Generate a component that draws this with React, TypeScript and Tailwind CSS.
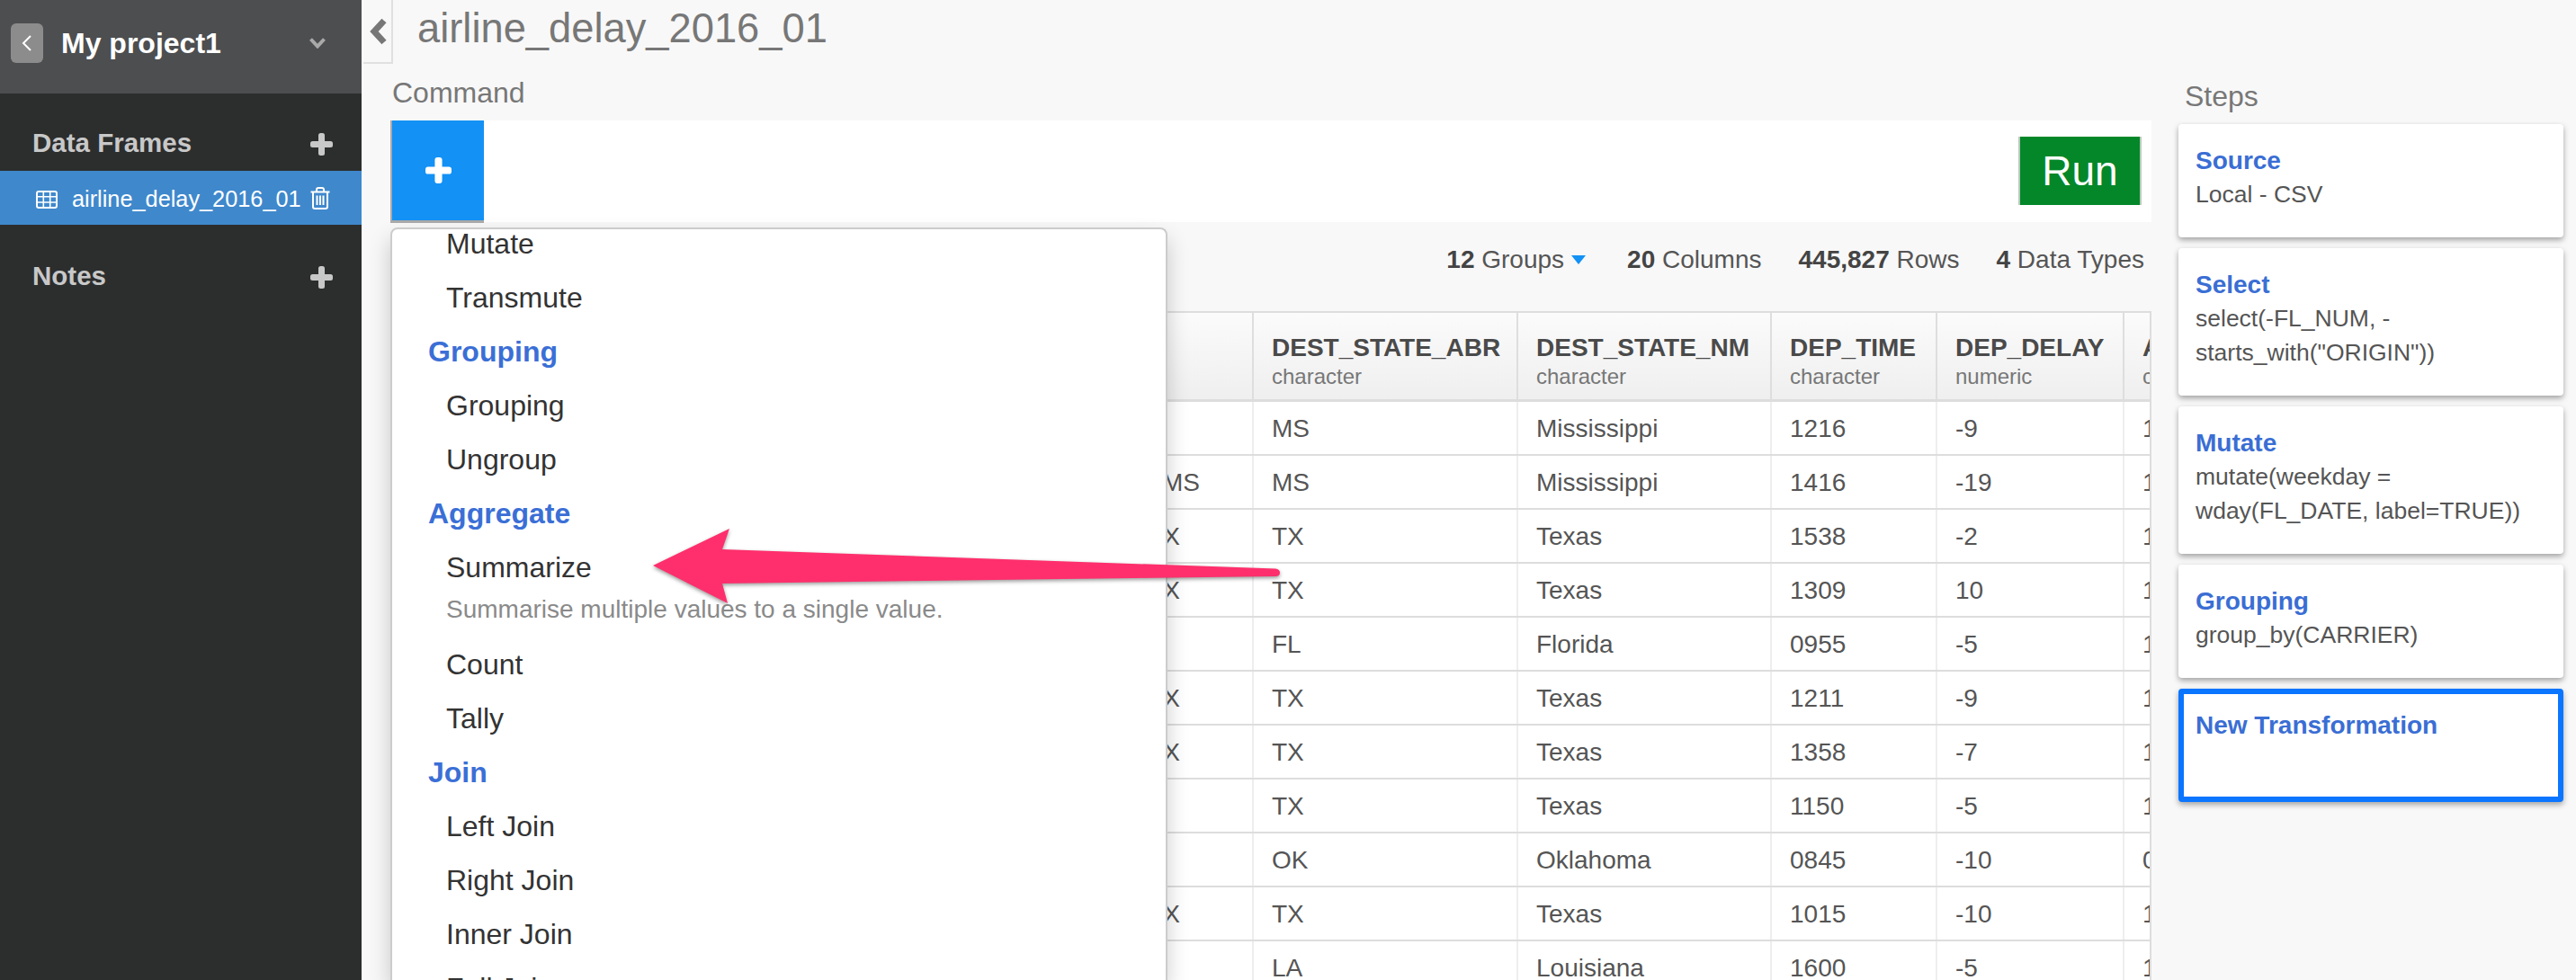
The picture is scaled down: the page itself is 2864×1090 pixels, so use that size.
import React from "react";

function Plus({ className }: { className: string }) {
  return (
    <svg viewBox="0 0 25 25" className={className} fill="currentColor">
      <rect x="9" y="0" width="7" height="25" rx="2.5" />
      <rect x="0" y="9" width="25" height="7" rx="2.5" />
    </svg>
  );
}

function TableIcon() {
  return (
    <svg viewBox="0 0 24 20" className="w-[24px] h-[20px] shrink-0 text-white" fill="none" stroke="currentColor" strokeWidth="2">
      <rect x="1" y="1" width="22" height="18" rx="2" />
      <path d="M1 6.8H23M1 13H23M8.3 1V19M15.7 1V19" strokeWidth="1.6" />
    </svg>
  );
}

function TrashIcon() {
  return (
    <svg viewBox="0 0 22 25" className="w-[22px] h-[25px] shrink-0 text-white" fill="none" stroke="currentColor" strokeWidth="2">
      <path d="M0.5 5.5H21.5" />
      <path d="M7 5V3C7 1.8 7.8 1 9 1H13C14.2 1 15 1.8 15 3V5" />
      <path d="M3 5.5V22C3 23.2 3.8 24 5 24H17C18.2 24 19 23.2 19 22V5.5" />
      <path d="M7.5 9.5V20M11 9.5V20M14.5 9.5V20" />
    </svg>
  );
}

type Row = { pad: string; hidden: string; abr: string; nm: string; time: string; delay: string; last: string };

const rows: Row[] = [
  { pad: "pr-[120px]", hidden: "Jackson, MS", abr: "MS", nm: "Mississippi", time: "1216", delay: "-9", last: "1" },
  { pad: "pr-[58px]", hidden: "Jackson/Vicksburg, MS", abr: "MS", nm: "Mississippi", time: "1416", delay: "-19", last: "1" },
  { pad: "pr-[80px]", hidden: "Dallas/Fort Worth, TX", abr: "TX", nm: "Texas", time: "1538", delay: "-2", last: "1" },
  { pad: "pr-[80px]", hidden: "Dallas/Fort Worth, TX", abr: "TX", nm: "Texas", time: "1309", delay: "10", last: "1" },
  { pad: "pr-[120px]", hidden: "Miami, FL", abr: "FL", nm: "Florida", time: "0955", delay: "-5", last: "1" },
  { pad: "pr-[80px]", hidden: "Dallas/Fort Worth, TX", abr: "TX", nm: "Texas", time: "1211", delay: "-9", last: "1" },
  { pad: "pr-[80px]", hidden: "Dallas/Fort Worth, TX", abr: "TX", nm: "Texas", time: "1358", delay: "-7", last: "1" },
  { pad: "pr-[120px]", hidden: "Houston, TX", abr: "TX", nm: "Texas", time: "1150", delay: "-5", last: "1" },
  { pad: "pr-[95px]", hidden: "Oklahoma City, OK", abr: "OK", nm: "Oklahoma", time: "0845", delay: "-10", last: "0" },
  { pad: "pr-[80px]", hidden: "Dallas/Fort Worth, TX", abr: "TX", nm: "Texas", time: "1015", delay: "-10", last: "1" },
  { pad: "pr-[120px]", hidden: "New Orleans, LA", abr: "LA", nm: "Louisiana", time: "1600", delay: "-5", last: "1" },
];

function HeadCell({ w, name, type }: { w: string; name: string; type: string }) {
  return (
    <div className={`${w} shrink-0 pl-[20px] pt-[20px] border-r-2 border-[#dedede] whitespace-nowrap overflow-hidden`}>
      <div className="text-[28px] leading-[38px] font-bold text-[#4a4a4a]">{name}</div>
      <div className="text-[24px] leading-[26px] text-[#777]">{type}</div>
    </div>
  );
}

function BodyCell({ w, children }: { w: string; children: React.ReactNode }) {
  return (
    <div className={`${w} shrink-0 pl-[20px] pt-px border-r-2 border-[#eeeeee] flex items-center whitespace-nowrap overflow-hidden`}>
      {children}
    </div>
  );
}

function Item({ children }: { children: string }) {
  return <div className="h-[60px] flex items-center pl-[60px] text-[#333]">{children}</div>;
}

function Head({ children }: { children: string }) {
  return <div className="h-[60px] flex items-center pl-[40px] font-bold text-[#3b6fd6]">{children}</div>;
}

function Step({ title, h, lines }: { title: string; h: string; lines: string[] }) {
  return (
    <div className={`${h} bg-white rounded-[4px] pl-[19px] pt-[22px] shadow-[0_3px_6px_rgba(0,0,0,0.35)]`}>
      <div className="text-[28px] leading-[37px] font-bold text-[#3a6ed4]">{title}</div>
      {lines.map((l) => (
        <div key={l} className="text-[26.5px] leading-[38px] text-[#555] whitespace-nowrap">{l}</div>
      ))}
    </div>
  );
}

export default function App() {
  return (
    <div className="relative flex h-[1090px] w-[2864px] overflow-hidden bg-[#f8f8f8] font-['Liberation_Sans',Arial,sans-serif]">
      <aside className="w-[402px] shrink-0 bg-[#2c2e2e] flex flex-col">
        <div className="h-[104px] pb-[8px] flex items-center bg-[#4d4e50] pl-[12px]">
          <div className="w-[36px] h-[44px] rounded-[6px] bg-[#8c8c8c] flex items-center justify-center">
            <svg viewBox="0 0 12 20" className="w-[12px] h-[20px]" fill="none" stroke="white" strokeWidth="2">
              <path d="M10 2L2 10L10 18" />
            </svg>
          </div>
          <div className="ml-[20px] text-[32px] font-bold text-white leading-none">My project1</div>
          <svg viewBox="0 0 18 12" className="ml-auto mr-[40px] w-[18px] h-[12px]" fill="none" stroke="#a9a9a9" strokeWidth="4">
            <path d="M1.5 1.5L9 9.5L16.5 1.5" />
          </svg>
        </div>
        <div className="mt-[26px] h-[60px] flex items-center pl-[36px] pr-[32px] justify-between text-[#c8c8c8]">
          <span className="text-[29.5px] font-bold -mt-[1px]">Data Frames</span>
          <Plus className="w-[25px] h-[25px]" />
        </div>
        <div className="h-[60px] bg-[#3f88cc] flex items-center pt-[4px] pl-[40px] text-white">
          <TableIcon />
          <span className="ml-[16px] text-[25.3px] whitespace-nowrap w-[265px]">airline_delay_2016_01</span>
          <span className="-mt-[4px]"><TrashIcon /></span>
        </div>
        <div className="mt-[28px] h-[60px] flex items-center pl-[36px] pr-[32px] justify-between text-[#c8c8c8]">
          <span className="text-[29.5px] font-bold -mt-[1px]">Notes</span>
          <Plus className="w-[25px] h-[25px]" />
        </div>
      </aside>

      <main className="relative flex-1 flex flex-col border-l-2 border-[#fff] min-w-0">
        <div className="h-[71px] flex items-start shrink-0">
          <div className="w-[33px] h-[71px] border-r-2 border-b-2 border-[#e0e0e0] flex items-center justify-center">
            <svg viewBox="0 0 20 30" className="w-[20px] h-[30px]" fill="none" stroke="#777" strokeWidth="7">
              <path d="M17 3L6 15L17 27" />
            </svg>
          </div>
          <h1 className="ml-[27px] text-[45.3px] leading-[64px] text-[#777] font-normal">airline_delay_2016_01</h1>
        </div>

        <div className="flex flex-1 min-h-0 pl-[30px]">
          <div className="w-[1958px] shrink-0 flex flex-col">
            <div className="h-[63px] flex items-center text-[32px] text-[#777] pl-[2px]">Command</div>
            <div className="h-[113px] bg-white flex items-start justify-between shrink-0">
              <div className="w-[104px] h-[114px] bg-[#1391f5] border-l-2 border-b-[3px] border-[#aaaaaa] flex items-center justify-center text-white">
                <Plus className="w-[29px] h-[29px]" />
              </div>
              <div className="mt-[18px] mr-[11px] w-[137px] h-[76px] bg-[#038729] border-x-2 border-[#b9c9bc] flex items-center justify-center text-white text-[46px]">
                Run
              </div>
            </div>
            <div className="h-[99px] shrink-0 flex items-center justify-end pr-[8px] gap-[41px] text-[28px] text-[#555] pb-[16px]">
              <span className="flex items-center">
                <b className="text-[#444]">12</b>&nbsp;Groups
                <svg viewBox="0 0 16 10" className="ml-[8px] mr-[5px] w-[16px] h-[10px]"><path d="M0 0H16L8 10Z" fill="#1391f5" /></svg>
              </span>
              <span><b className="text-[#444]">20</b> Columns</span>
              <span><b className="text-[#444]">445,827</b> Rows</span>
              <span><b className="text-[#444]">4</b> Data Types</span>
            </div>
            <div className="flex-1 min-h-0 overflow-hidden border-2 border-[#dddddd] border-b-0 bg-white flex flex-col">
              <div className="h-[99px] shrink-0 flex bg-gradient-to-b from-[#fbfbfb] to-[#efefef] border-b-[3px] border-[#dddddd]">
                <HeadCell w="w-[958px]" name="DEST_CITY_NM" type="character" />
                <HeadCell w="w-[294px]" name="DEST_STATE_ABR" type="character" />
                <HeadCell w="w-[282px]" name="DEST_STATE_NM" type="character" />
                <HeadCell w="w-[184px]" name="DEP_TIME" type="character" />
                <HeadCell w="w-[208px]" name="DEP_DELAY" type="numeric" />
                <HeadCell w="w-[150px]" name="ARR_TIME" type="character" />
              </div>
              {rows.map((r, i) => (
                <div key={i} className="h-[60px] shrink-0 flex border-b-2 border-[#dddddd] text-[28px] text-[#555]">
                  <div className={`w-[958px] shrink-0 pt-px border-r-2 border-[#eeeeee] flex items-center justify-end whitespace-nowrap ${r.pad}`}>{r.hidden}</div>
                  <BodyCell w="w-[294px]">{r.abr}</BodyCell>
                  <BodyCell w="w-[282px]">{r.nm}</BodyCell>
                  <BodyCell w="w-[184px]">{r.time}</BodyCell>
                  <BodyCell w="w-[208px]">{r.delay}</BodyCell>
                  <BodyCell w="w-[150px]">{r.last}</BodyCell>
                </div>
              ))}
            </div>
          </div>

          <div className="ml-[30px] w-[428px] shrink-0 flex flex-col">
            <div className="h-[67px] flex items-center pl-[7px] pt-[4px] text-[32px] text-[#777]">Steps</div>
            <div className="flex flex-col gap-[12px]">
              <Step title="Source" h="h-[126px]" lines={["Local - CSV"]} />
              <Step title="Select" h="h-[164px]" lines={["select(-FL_NUM, -", 'starts_with("ORIGIN"))']} />
              <Step title="Mutate" h="h-[164px]" lines={["mutate(weekday =", "wday(FL_DATE, label=TRUE))"]} />
              <Step title="Grouping" h="h-[126px]" lines={["group_by(CARRIER)"]} />
              <div className="h-[126px] bg-white rounded-[4px] border-[6px] border-[#0a75ff] pl-[13px] pt-[16px] shadow-[0_3px_6px_rgba(0,0,0,0.35)]">
                <div className="text-[28px] leading-[38px] font-bold text-[#3a6ed4]">New Transformation</div>
              </div>
            </div>
          </div>
        </div>

        <div className="absolute left-[30px] top-[253px] bottom-0 w-[864px] bg-white overflow-hidden rounded-t-[8px] border-2 border-b-0 border-[#cccccc] shadow-[0_12px_24px_rgba(0,0,0,0.2)] text-[32px]">
          <div className="-mt-[14px]">
            <Item>Mutate</Item>
            <Item>Transmute</Item>
            <Head>Grouping</Head>
            <Item>Grouping</Item>
            <Item>Ungroup</Item>
            <Head>Aggregate</Head>
            <Item>Summarize</Item>
            <div className="h-[48px] pl-[60px] text-[28px] leading-[34px] text-[#8a8a8a]">Summarise multiple values to a single value.</div>
            <Item>Count</Item>
            <Item>Tally</Item>
            <Head>Join</Head>
            <Item>Left Join</Item>
            <Item>Right Join</Item>
            <Item>Inner Join</Item>
            <Item>Full Join</Item>
          </div>
        </div>
      </main>

      <svg viewBox="720 580 710 100" className="absolute left-[720px] top-[580px] w-[710px] h-[100px] drop-shadow-[0_2px_2px_rgba(0,0,0,0.4)]">
        <path
          d="M726 629L811 588L803 611L1418 632.5Q1423 633 1423 637Q1423 641 1418 641L803 649L809 671Z"
          fill="#fe2f6c"
        />
      </svg>
    </div>
  );
}
